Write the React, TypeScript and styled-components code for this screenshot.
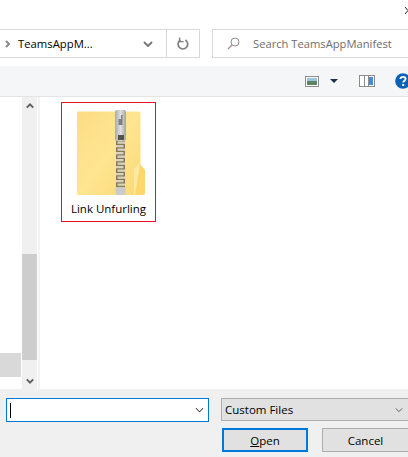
import React from "react";
import styled, { createGlobalStyle } from "styled-components";

const GlobalStyle = createGlobalStyle`
	html, body {
		margin: 0;
		padding: 0;
		background: #ffffff;
	}
	* {
		box-sizing: border-box;
	}
`;

const Dialog = styled.div`
	width: 408px;
	height: 457px;
	overflow: hidden;
	display: flex;
	flex-direction: column;
	background: #ffffff;
	font-family: "Open Sans", "Liberation Sans", sans-serif;
	font-size: 11.5px;
	color: #000000;
`;

const TitleBar = styled.div`
	height: 29px;
	display: flex;
	justify-content: flex-end;
	padding-top: 7px;
	flex: none;
`;

const AddressRow = styled.div`
	height: 29px;
	display: flex;
	justify-content: space-between;
	flex: none;
`;

const PathBox = styled.div`
	width: 201px;
	margin-left: -1px;
	display: flex;
	align-items: center;
	border: 1px solid #d9d9d9;
`;

const PathText = styled.span`
	margin-left: 7px;
	flex: 1;
	font-size: 11.3px;
	white-space: nowrap;
`;

const PathArrow = styled.span`
	margin-left: 5px;
	display: flex;
`;

const PathChevron = styled.span`
	width: 18px;
	margin-right: 9px;
	display: flex;
	justify-content: center;
`;

const RefreshCell = styled.div`
	width: 33px;
	height: 100%;
	display: flex;
	align-items: center;
	justify-content: center;
	border-left: 1px solid #d9d9d9;
`;

const SearchBox = styled.div`
	width: 196px;
	display: flex;
	align-items: center;
	padding-left: 14px;
	border: 1px solid #d9d9d9;
	border-right: none;
`;

const SearchText = styled.span`
	margin-left: 13px;
	font-size: 11.2px;
	color: #6d6d6d;
	white-space: nowrap;
`;

const Toolbar = styled.div`
	margin-top: 8px;
	height: 31px;
	flex: none;
	display: flex;
	align-items: center;
	justify-content: flex-end;
	background: #f5f6f7;
	border-bottom: 1px solid #e5e5e5;
`;

const ToolIcon = styled.span<{ $gap: number }>`
	display: flex;
	margin-right: ${(p) => p.$gap}px;
`;

const Content = styled.div`
	flex: 1;
	display: flex;
	min-height: 0;
`;

const NavPane = styled.div`
	width: 22px;
	flex: none;
	display: flex;
	flex-direction: column;
	justify-content: flex-end;
	padding-bottom: 12px;
`;

const NavSelected = styled.div`
	width: 21px;
	height: 24px;
	background: #d9d9d9;
`;

const ScrollBar = styled.div`
	width: 15px;
	flex: none;
	display: flex;
	flex-direction: column;
	background: #f0f0f0;
`;

const ScrollButton = styled.div<{ $height: number }>`
	height: ${(p) => p.$height}px;
	display: flex;
	align-items: center;
	justify-content: center;
	flex: none;
`;

const ScrollTrack = styled.div`
	flex: 1;
	display: flex;
	flex-direction: column;
	justify-content: flex-end;
	padding-bottom: 12px;
`;

const ScrollThumb = styled.div`
	height: 106px;
	background: #cdcdcd;
`;

const Splitter = styled.div`
	width: 2px;
	flex: none;
	margin-left: 1px;
	background: #f3f3f3;
`;

const FileArea = styled.div`
	flex: 1;
	padding: 5px 0 0 21px;
`;

const FileTile = styled.div`
	width: 95px;
	height: 120px;
	border: 1px solid #e81123;
	display: flex;
	flex-direction: column;
	align-items: center;
	padding-top: 7px;
`;

const FolderIcon = styled.span`
	align-self: flex-start;
	margin-left: 15px;
	display: flex;
`;

const FileName = styled.span`
	margin-top: 7px;
	line-height: 14px;
	white-space: nowrap;
`;

const Footer = styled.div`
	height: 68px;
	flex: none;
	background: #f0f0f0;
	padding: 9px 0 0 6px;
	display: flex;
	flex-direction: column;
	gap: 6px;
`;

const FooterRow = styled.div`
	display: flex;
	align-items: flex-start;
`;

const NameInput = styled.div`
	width: 203px;
	height: 24px;
	flex: none;
	display: flex;
	align-items: center;
	justify-content: space-between;
	padding: 0 4px 0 3px;
	background: #ffffff;
	border: 1px solid #0078d7;
`;

const Caret = styled.span`
	width: 1px;
	height: 15px;
	background: #000000;
`;

const TypeSelect = styled.div`
	width: 188px;
	height: 23px;
	flex: none;
	margin-left: 12px;
	display: flex;
	align-items: center;
	justify-content: space-between;
	padding: 0 5px 0 3px;
	background: #e1e1e1;
	border: 1px solid #adadad;
`;

const Buttons = styled.div`
	display: flex;
	justify-content: flex-end;
	gap: 14px;
	margin-right: -1px;
`;

const DialogButton = styled.div<{ $primary?: boolean }>`
	width: ${(p) => (p.$primary ? 86 : 87)}px;
	height: 24px;
	display: flex;
	align-items: center;
	justify-content: center;
	background: #e1e1e1;
	border: ${(p) => (p.$primary ? "2px solid #0078d7" : "1px solid #adadad")};
`;

const Mnemonic = styled.span`
	text-decoration: underline;
`;

function Chevron(props: { up?: boolean; width?: number; color?: string; sw?: number }) {
	const w = props.width ?? 10;
	return (
		<svg width={w} height={6} viewBox="0 0 10 6">
			<path
				d={props.up ? "M1 5L5 1L9 5" : "M1 1L5 5L9 1"}
				fill="none"
				stroke={props.color ?? "#606060"}
				strokeWidth={props.sw ?? 2}
			/>
		</svg>
	);
}

function ZipFolder() {
	const teeth = [];
	for (let y = 0; y < 13; y++) {
		teeth.push(
			<rect key={y} x={y % 2 ? 39 : 40.5} y={30.5 + y * 3.5} width={7.5} height={2.3} fill="#d6d3c0" />,
		);
	}
	return (
		<svg width={68} height={85} viewBox="0 -1 68 85">
			<defs>
				<linearGradient id="folderBody" x1="0" y1="0" x2="1" y2="1">
					<stop offset="0" stopColor="#fcdc85" />
					<stop offset="0.5" stopColor="#ffe591" />
					<stop offset="1" stopColor="#fbd976" />
				</linearGradient>
				<linearGradient id="zipHead" x1="0" y1="0" x2="1" y2="0">
					<stop offset="0" stopColor="#a9a9a9" />
					<stop offset="0.5" stopColor="#e0e0e0" />
					<stop offset="1" stopColor="#a4a4a4" />
				</linearGradient>
			</defs>
			<path d="M0 1.5a1 1 0 0 1 1-1H62a1.5 1.5 0 0 1 1.5 1.5V84H0Z" fill="url(#folderBody)" />
			<path d="M57 84V58L62 52L68 59V82a2 2 0 0 1-2 2Z" fill="#fdd66c" />
			<path d="M57 58L62 52L63 53.2L58 84H57Z" fill="#fee9a6" />
			<rect x={38} y={-1} width={11} height={31} rx={2} fill="url(#zipHead)" />
			<path d="M41.5 14V8H44V4H45.5V14Z" fill="#7f7f7f" />
			<rect x={41} y={24} width={6} height={5} fill="#55544c" />
			<rect x={39} y={30} width={9} height={47} fill="#857a50" />
			{teeth}
			<rect x={38.5} y={76} width={10} height={8} fill="#cbcbcb" />
		</svg>
	);
}

export default function App() {
	return (
		<Dialog>
			<GlobalStyle />
			<TitleBar>
				<svg width={3} height={7} viewBox="0 0 3 7">
					<path d="M0 0L3 3.5L0 7" fill="none" stroke="#222222" strokeWidth={1} />
				</svg>
			</TitleBar>
			<AddressRow>
				<PathBox>
					<PathArrow>
						<svg width={6} height={8} viewBox="0 0 6 8">
							<path d="M1 1L4 4L1 7" fill="none" stroke="#8a8a8a" strokeWidth={2} />
						</svg>
					</PathArrow>
					<PathText>TeamsAppM...</PathText>
					<PathChevron>
						<Chevron color="#7a7a7a" />
					</PathChevron>
					<RefreshCell>
						<svg width={12} height={13} viewBox="0 0 12 13">
							<path d="M8.4 3.1A4.8 4.8 0 1 1 3.4 3.1" fill="none" stroke="#808080" strokeWidth={1.7} />
							<path d="M2.6 0.5V4.6H6.7" fill="none" stroke="#808080" strokeWidth={1.4} />
						</svg>
					</RefreshCell>
				</PathBox>
				<SearchBox>
					<svg width={13} height={13} viewBox="0 0 13 13">
						<circle cx={8} cy={5} r={4} fill="none" stroke="#8f8f8f" strokeWidth={1} />
						<path d="M5 8L1 12" stroke="#b08a8a" strokeWidth={1.2} />
					</svg>
					<SearchText>Search TeamsAppManifest</SearchText>
				</SearchBox>
			</AddressRow>
			<Toolbar>
				<ToolIcon $gap={11}>
					<svg width={14} height={11} viewBox="0 0 14 11">
						<rect x={0.5} y={0.5} width={13} height={10} fill="#ffffff" stroke="#8c8c8c" />
						<rect x={2} y={2} width={10} height={3} fill="#9fc3d8" />
						<rect x={2} y={5} width={10} height={4} fill="#5c8568" />
					</svg>
				</ToolIcon>
				<ToolIcon $gap={21}>
					<svg width={8} height={4} viewBox="0 0 8 4">
						<path d="M0 0H8L4 4Z" fill="#1c2f4a" />
					</svg>
				</ToolIcon>
				<ToolIcon $gap={20}>
					<svg width={16} height={12} viewBox="0 0 16 12">
						<rect x={0.5} y={0.5} width={15} height={11} fill="#ffffff" stroke="#8c8c8c" />
						<rect x={10} y={2} width={4} height={8} fill="#3c8fdc" />
						<path d="M5.5 1V11M9.5 1V11" stroke="#8c8c8c" />
					</svg>
				</ToolIcon>
				<ToolIcon $gap={-3}>
					<svg width={16} height={16} viewBox="0 0 16 16">
						<circle cx={8} cy={8} r={7.8} fill="#0a62b8" />
						<path d="M5.4 6C5.6 3.2 10.6 3.2 10.6 6C10.6 7.8 8.2 7.9 8.2 9.6" fill="none" stroke="#ffffff" strokeWidth={1.9} />
						<rect x={7.2} y={11} width={2} height={2} fill="#ffffff" />
					</svg>
				</ToolIcon>
			</Toolbar>
			<Content>
				<NavPane>
					<NavSelected />
				</NavPane>
				<ScrollBar>
					<ScrollButton $height={18}>
						<Chevron up width={8} sw={2.5} />
					</ScrollButton>
					<ScrollTrack>
						<ScrollThumb />
					</ScrollTrack>
					<ScrollButton $height={17}>
						<Chevron width={8} sw={2.5} />
					</ScrollButton>
				</ScrollBar>
				<Splitter />
				<FileArea>
					<FileTile>
						<FolderIcon>
							<ZipFolder />
						</FolderIcon>
						<FileName>Link Unfurling</FileName>
					</FileTile>
				</FileArea>
			</Content>
			<Footer>
				<FooterRow>
					<NameInput>
						<Caret />
						<Chevron width={9} sw={1.2} color="#555555" />
					</NameInput>
					<TypeSelect>
						<span>Custom Files</span>
						<Chevron width={8} sw={1.2} color="#555555" />
					</TypeSelect>
				</FooterRow>
				<Buttons>
					<DialogButton $primary>
						<span>
							<Mnemonic>O</Mnemonic>pen
						</span>
					</DialogButton>
					<DialogButton>Cancel</DialogButton>
				</Buttons>
			</Footer>
		</Dialog>
	);
}
